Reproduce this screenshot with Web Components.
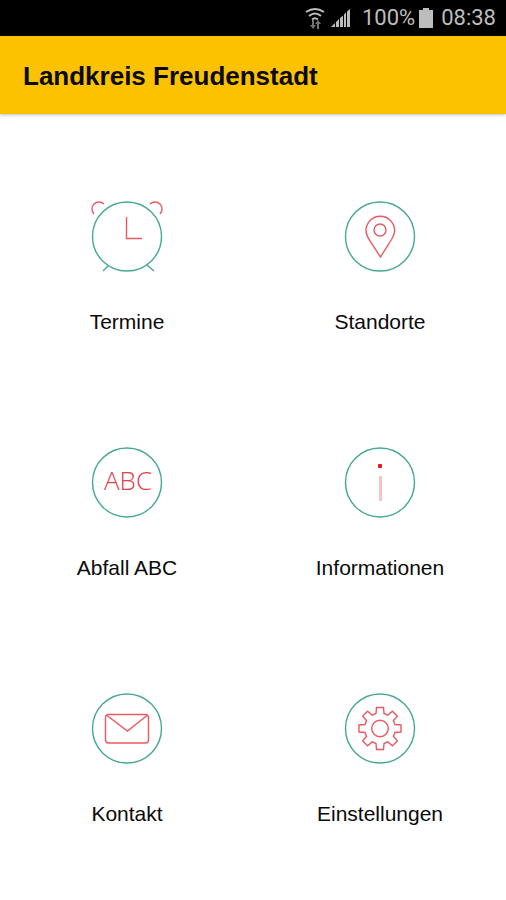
<!DOCTYPE html>
<html lang="de">
<head>
<meta charset="utf-8">
<meta name="viewport" content="width=device-width, initial-scale=1">
<title>Landkreis Freudenstadt</title>
<style>
  body {
    margin: 0;
    background: #fff;
    color: #0a0a0a;
    font-family: "Liberation Sans", Arial, sans-serif;
  }
</style>
</head>
<body>
<waste-app>
  <status-bar slot="status" battery="100%" time="08:38"></status-bar>
  <app-header slot="header">Landkreis Freudenstadt</app-header>
  <menu-tile icon="clock">Termine</menu-tile>
  <menu-tile icon="pin">Standorte</menu-tile>
  <menu-tile icon="abc">Abfall ABC</menu-tile>
  <menu-tile icon="info">Informationen</menu-tile>
  <menu-tile icon="mail">Kontakt</menu-tile>
  <menu-tile icon="gear">Einstellungen</menu-tile>
</waste-app>

<script>
/**
 * Inner drawings of the tile icons, on an 80x80 grid.
 * .a = accent (red) strokes, everything else takes the ring colour.
 */
const ICONS = {
  clock: `
    <path d="M21 69 16 74M60 68 67 74"/>
    <path class="a" d="M7 17A6.500 6.500 0 0 1 17 7M73 17A6.500 6.500 0 0 0 63 7"/>
    <path class="a" d="M39.500 20V41.500H55"/>`,
  pin: `
    <path class="a" d="M40.500 60 29 42.500C27 39 26 36.500 26 33.500A14.300 14.300 0 0 1 54.600 33.500C54.600 36.500 53.500 39 51.500 42.500Z"/>
    <circle class="a" cx="40" cy="33" r="6"/>`,
  abc: `<text x="41" y="47" text-anchor="middle">ABC</text>`,
  info: `
    <rect class="stem" x="39" y="33" width="3" height="25"/>
    <rect class="dot" x="38" y="21" width="4" height="4" rx="1"/>`,
  mail: `
    <rect class="a" x="18.500" y="25.500" width="43" height="28.500" rx="3"/>
    <path class="a" d="M20 26.500 40.500 42 60 26.500"/>`,
  gear: `
    <path class="a" transform="translate(40 39.500)" d="M-4-15-3.500-21H3.500L4-15 7.800-13.400 12.400-17.300 17.300-12.400 13.400-7.800 15-4 21-3.500V3.500L15 4 13.400 7.800 17.300 12.400 12.400 17.300 7.800 13.400 4 15 3.500 21H-3.500L-4 15-7.800 13.400-12.400 17.300-17.300 12.400-13.400 7.800-15 4-21 3.500V-3.500L-15-4-13.400-7.800-17.300-12.400-12.400-17.300-7.800-13.400Z"/>
    <circle class="a" cx="40" cy="39.500" r="8.300"/>`,
};

/** <waste-app> - page frame: status, header and a two-column tile grid. */
class WasteApp extends HTMLElement {
  constructor() {
    super();
    this.attachShadow({ mode: 'open' }).innerHTML = `
<style>
  :host { display: flex; flex-direction: column; min-height: 100vh; }
  main {
    display: grid;
    grid-template-columns: 1fr 1fr;
    padding: 30px 0 16px;
  }
</style>
<slot name="status"></slot>
<slot name="header"></slot>
<main><slot></slot></main>`;
  }
}

/** <status-bar battery time> - phone status line. */
class StatusBar extends HTMLElement {
  constructor() {
    super();
    this.attachShadow({ mode: 'open' }).innerHTML = `
<style>
  :host {
    display: flex;
    align-items: center;
    justify-content: flex-end;
    height: 36px;
    padding-right: 10px;
    background: #000;
    color: #bdbdbd;
    font: 22px/36px Roboto, sans-serif;
  }
  svg { display: block; fill: currentColor; }
  .wifi { margin-right: 4px; }
  .signal { margin-right: 11px; }
  .cell { margin: 0 8px 0 4px; }
</style>
<svg class="wifi" width="22" height="22" viewBox="0 0 22 22" aria-hidden="true">
  <path fill="none" stroke="currentColor" stroke-width="2" d="M1 5Q10-1 19 5M4 9Q10 4 16 9M7 12.500Q10 10 13 12.500"/>
  <path opacity=".6" d="M7 13v5H5l3 4 3-4H9v-5zM12 22v-5h-2l3-4 3 4h-2v5z"/>
</svg>
<svg class="signal" width="20" height="20" viewBox="0 0 20 20" aria-hidden="true">
  <path d="M0 19 4 15V19ZM5 14 8 11V19H5ZM9 10 12 7.500V19H9ZM13 6.500 15 4.500V19H13ZM16 3.500 19 1V19H16Z"/>
</svg>
<span id="battery"></span>
<svg class="cell" width="14" height="20" viewBox="0 0 14 20" aria-hidden="true">
  <path d="M4 0H10V2H14V20H0V2H4Z"/>
</svg>
<span id="time"></span>`;
  }

  connectedCallback() {
    this.shadowRoot.getElementById('battery').textContent = this.getAttribute('battery');
    this.shadowRoot.getElementById('time').textContent = this.getAttribute('time');
  }
}

/** <app-header> - title bar, the title is slotted. */
class AppHeader extends HTMLElement {
  constructor() {
    super();
    this.attachShadow({ mode: 'open' }).innerHTML = `
<style>
  :host {
    display: block;
    padding: 25px 23px 23px;
    background: #fcc200;
    box-shadow: 0 1px 3px rgba(0, 0, 0, .25);
  }
  h1 { margin: 0; font-size: 26px; line-height: 30px; font-weight: 700; }
</style>
<header><h1><slot></slot></h1></header>`;
  }
}

/** <menu-tile icon> - round icon over a label, the whole tile is a button. */
class MenuTile extends HTMLElement {
  constructor() {
    super();
    this.attachShadow({ mode: 'open' });
  }

  connectedCallback() {
    this.shadowRoot.innerHTML = `
<style>
  :host { display: block; }
  button {
    display: flex;
    flex-direction: column;
    align-items: center;
    gap: 33px;
    width: 100%;
    padding: 53px 0 56px 1px;
    border: 0;
    background: none;
    color: inherit;
    font: inherit;
    font-size: 21px;
    line-height: 24px;
    cursor: pointer;
  }
  svg {
    display: block;
    fill: none;
    stroke: #45a893;
    stroke-width: 1.4;
  }
  .a { stroke: #ea5a62; }
  .dot { fill: #f0141e; stroke: none; }
  .stem { fill: #f7c3c7; stroke: none; }
  text {
    fill: #e5404c;
    stroke: none;
    font: 300 26px "Open Sans", sans-serif;
  }
</style>
<button type="button">
  <svg width="80" height="80" viewBox="0 0 80 80" aria-hidden="true">
    <circle cx="40" cy="39.500" r="34.500"/>
    ${ICONS[this.getAttribute('icon')] ?? ''}
  </svg>
  <span><slot></slot></span>
</button>`;
  }
}

customElements.define('waste-app', WasteApp);
customElements.define('status-bar', StatusBar);
customElements.define('app-header', AppHeader);
customElements.define('menu-tile', MenuTile);
</script>
</body>
</html>
